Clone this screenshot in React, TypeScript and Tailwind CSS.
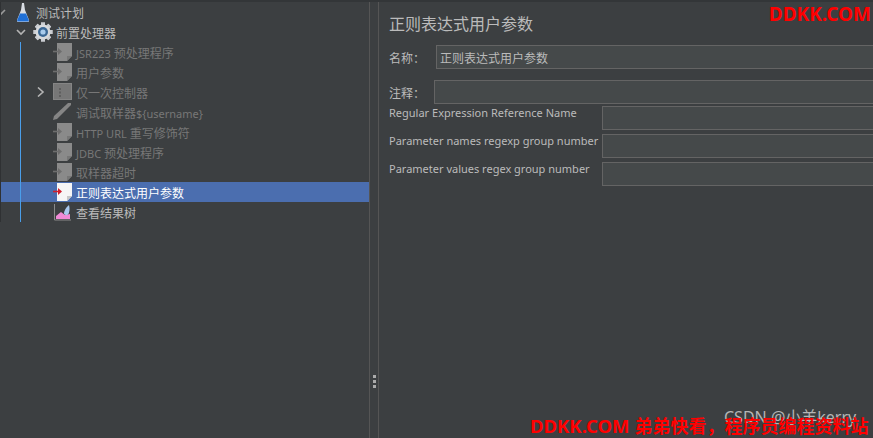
const F = { fontFamily: '"Noto Sans","Noto Sans CJK SC",sans-serif' };

function Doc({ active = false }: { active?: boolean }) {
  const fill = active ? "#f6f6f6" : "#8a8a8a";
  const arrow = active ? "#d01f2e" : "#6e6e6e";
  return (
    <svg width="20" height="20" viewBox="0 0 20 20" className="shrink-0">
      <path d="M4 1H19V14L14 19H4Z" fill={fill} />
      <path d="M19 14L14 19V14Z" fill={active ? "#c8c8c8" : "#777777"} />
      <path d="M0 9.500H6" stroke={arrow} strokeWidth="1.600" />
      <path d="M5 6L9 9.500L5 13Z" fill={arrow} />
    </svg>
  );
}

function Flask() {
  return (
    <svg width="20" height="20" viewBox="0 0 20 20" className="shrink-0">
      <path d="M9 1H11L12 8L16 18Q16.500 20 15 20H5Q3.500 20 4 18L8 8Z" fill="#d9dde3" />
      <path d="M7 11.500H13L15.800 18Q16 19.600 15 19.600H5Q4 19.600 4.200 18Z" fill="#1f6fd6" />
    </svg>
  );
}

function Gear() {
  const teeth = [0, 45, 90, 135, 180, 225, 270, 315];
  return (
    <svg width="20" height="20" viewBox="0 0 20 20" className="shrink-0">
      {teeth.map((a) => (
        <rect key={a} x="8" y="0.500" width="4" height="19" fill="#c9ccd0" transform={`rotate(${a} 10 10)`} />
      ))}
      <circle cx="10" cy="10" r="7.500" fill="#d7d9dc" />
      <circle cx="10" cy="10" r="5" fill="#3a6794" />
      <circle cx="10" cy="10" r="2.600" fill="#a8cbec" />
    </svg>
  );
}

function Ctrl() {
  return (
    <svg width="20" height="20" viewBox="0 0 20 20" className="shrink-0">
      <rect x="0" y="1" width="19" height="17" fill="#777777" />
      <rect x="0.500" y="1.500" width="18" height="16" fill="none" stroke="#858585" />
      <rect x="6" y="6" width="2" height="2" fill="#5f5f5f" />
      <rect x="6" y="9.500" width="2" height="2" fill="#5f5f5f" />
      <rect x="6" y="13" width="2" height="2" fill="#5f5f5f" />
    </svg>
  );
}

function Pen() {
  return (
    <svg width="20" height="20" viewBox="0 0 20 20" className="shrink-0">
      <path d="M0 18L1 14L15 1H18V3L4 17Z" fill="#858585" />
    </svg>
  );
}

function Tree() {
  return (
    <svg width="20" height="20" viewBox="0 0 20 20" className="shrink-0">
      <path d="M1.500 2V18H18" stroke="#8a8a8a" strokeWidth="1" fill="none" />
      <path d="M3 17V14L8 10L12 13L17 12V17Z" fill="#f08ad6" />
      <path d="M11 12Q11 7 16 3Q17.500 9 15 12.500Q13 14 11 12Z" fill="#a9c8ee" />
    </svg>
  );
}

function Chevron({ open }: { open: boolean }) {
  return (
    <svg width="10" height="10" viewBox="0 0 10 10" className="shrink-0">
      <path d={open ? "M1 3L5 7L9 3" : "M3 0.500L8 5L3 9.500"} stroke="#b4b4b4" strokeWidth="1.600" fill="none" />
    </svg>
  );
}

function Row({ label, latin, icon, dim = true, active = false, chevron = false, after }: { label: string; latin?: string; icon: React.ReactNode; dim?: boolean; active?: boolean; chevron?: boolean; after?: string }) {
  return (
    <div className={`flex h-5 items-center pl-[34px] ${active ? "bg-[#4b6eaf] text-white" : dim ? "text-[#777777]" : "text-[#bbbbbb]"}`}>
      <div className="w-[18px] shrink-0">{chevron ? <Chevron open={false} /> : null}</div>
      <div className="w-[23px] shrink-0">{icon}</div>
      <span className="pt-[3px] text-[12px] leading-5 whitespace-nowrap">
        {latin ? <span className="text-[11px]">{latin}</span> : null}
        {label}
        {after ? <span className="text-[11px]">{after}</span> : null}
      </span>
    </div>
  );
}

function Field({ label }: { label: string }) {
  return (
    <div className="flex h-6 items-start">
      <span className="w-[213px] shrink-0 text-[11px] leading-[14px] whitespace-nowrap text-[#bbbbbb]">{label}</span>
      <div className="h-6 flex-1 border border-r-0 border-[#646464] bg-[#45494a]" />
    </div>
  );
}

export default function App() {
  return (
    <div className="relative flex h-[438px] w-[873px] overflow-hidden border-t-2 border-[#333638] bg-[#3c3f41]" style={F}>
      <div className="w-[369px] shrink-0">
        <div className="border-l border-[#2f3133]">
          <div className="flex h-5 items-center text-[12px] text-[#bbbbbb]">
            <svg width="5" height="10" viewBox="0 0 5 10" className="shrink-0">
              <path d="M-1 8L4 3" stroke="#9a9a9a" strokeWidth="1.600" fill="none" />
            </svg>
            <div className="ml-[7px] w-[23px] shrink-0"><Flask /></div>
            <span className="pt-[3px]">测试计划</span>
          </div>
          <div className="flex h-5 items-center pl-[15px] text-[12px] text-[#bbbbbb]">
            <div className="w-[17px] shrink-0"><Chevron open /></div>
            <div className="w-[23px] shrink-0"><Gear /></div>
            <span className="pt-[3px]">前置处理器</span>
          </div>
          <div className="relative">
            <div className="absolute left-[19px] top-0 h-[180px] w-px bg-[#4a9eea]" />
            <Row latin="JSR223 " label="预处理程序" icon={<Doc />} />
            <Row label="用户参数" icon={<Doc />} />
            <Row label="仅一次控制器" icon={<Ctrl />} chevron />
            <Row label="调试取样器" after="${username}" icon={<Pen />} />
            <Row latin="HTTP URL " label="重写修饰符" icon={<Doc />} />
            <Row latin="JDBC " label="预处理程序" icon={<Doc />} />
            <Row label="取样器超时" icon={<Doc />} />
            <Row label="正则表达式用户参数" icon={<Doc active />} active />
            <Row label="查看结果树" icon={<Tree />} dim={false} />
          </div>
        </div>
      </div>
      <div className="flex w-[10px] shrink-0 items-center justify-center border-x border-[#555555]">
        <div className="mt-[322px] flex flex-col gap-[2px]">
          <div className="h-[3px] w-[3px] bg-[#aaaaaa]" />
          <div className="h-[3px] w-[3px] bg-[#aaaaaa]" />
          <div className="h-[3px] w-[3px] bg-[#aaaaaa]" />
        </div>
      </div>
      <div className="flex-1 pl-[10px] pt-[11px]">
        <div className="h-[22px] text-[16px] leading-[22px] text-[#bbbbbb]">正则表达式用户参数</div>
        <div className="mt-[10px] flex h-6 items-center">
          <span className="w-[47px] shrink-0 pt-[3px] text-[12px] text-[#bbbbbb]">名称：</span>
          <div className="flex h-6 flex-1 items-center border border-r-0 border-[#646464] bg-[#45494a] pl-[3px] pt-[3px] text-[12px] text-[#bbbbbb]">正则表达式用户参数</div>
        </div>
        <div className="mt-[11px] flex h-6 items-center">
          <span className="w-[45px] shrink-0 pt-[3px] text-[12px] text-[#bbbbbb]">注释：</span>
          <div className="h-6 flex-1 border border-r-0 border-[#646464] bg-[#45494a]" />
        </div>
        <div className="mt-[2px] flex flex-col gap-1">
          <Field label="Regular Expression Reference Name" />
          <Field label="Parameter names regexp group number" />
          <Field label="Parameter values regex group number" />
        </div>
      </div>
      <div className="absolute right-[2px] top-0 text-[19px] leading-6 font-bold text-[#ff0000]">DDKK.COM</div>
      <div className="absolute left-[724px] top-[405px] text-[16px] leading-5 whitespace-nowrap text-[#b5b5b5]">CSDN @小羊kerry</div>
      <div className="absolute left-[530px] top-[412px] flex items-baseline whitespace-nowrap font-bold text-[#ff0000]">
        <span className="text-[18.5px] leading-6">DDKK.COM</span>
        <span className="ml-[5px] text-[18px] leading-6">弟弟快看，程序员编程资料站</span>
      </div>
    </div>
  );
}
